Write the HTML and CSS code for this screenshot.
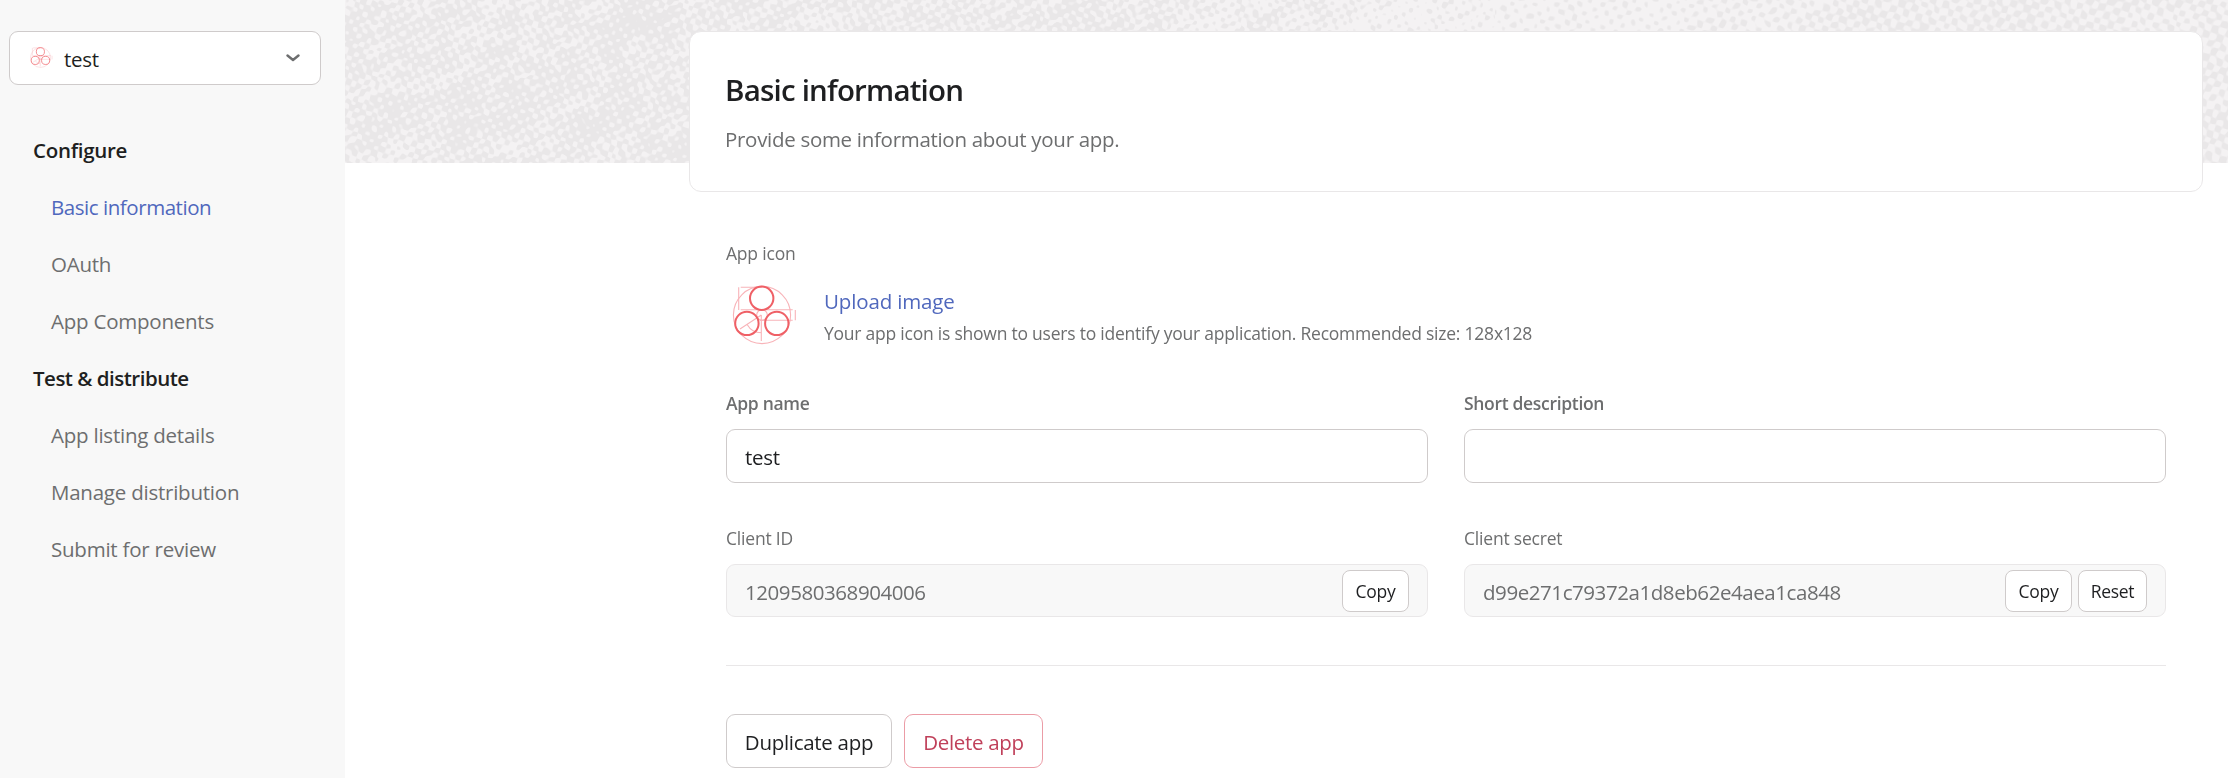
FILE: index.html
```html
<!DOCTYPE html>
<html lang="en">
<head>
<meta charset="utf-8">
<title>Basic information</title>
<link rel="stylesheet" href="styles.css">
</head>
<body>
<svg class="defs" aria-hidden="true">
  <symbol id="app-logo" viewBox="0 0 72 72">
    <g fill="none" stroke="#f8b4b9" stroke-width="1.100">
      <circle cx="36" cy="36" r="28.600"/>
      <circle cx="36" cy="36" r="5.300"/>
      <path d="M14.700 8.300H36M12.700 8.300V31M14.700 30.700H66.700M34 41.300H66.700M69.300 31V41.300M35.300 36V62M14 50L35.300 36M21.300 45.700q4.500 8 14 8"/>
    </g>
    <g fill="none" stroke="#ef6066" stroke-width="2">
      <circle cx="35.700" cy="19.300" r="11.700"/><circle cx="20.900" cy="44.400" r="11.700"/><circle cx="50.800" cy="44.400" r="11.700"/>
    </g>
  </symbol>
</svg>
<div class="page">
  <aside class="sidebar">
    <button class="picker">
      <svg class="picker-logo"><use href="#app-logo"/></svg>
      <span class="picker-name">test</span>
      <svg class="chevron" viewBox="0 0 14 8"><path d="M1.500 1.500L7 6L12.500 1.500"/></svg>
    </button>
    <nav class="nav">
      <h2 class="nav-title">Configure</h2>
      <a class="nav-link active">Basic information</a>
      <a class="nav-link">OAuth</a>
      <a class="nav-link">App Components</a>
      <h2 class="nav-title tight">Test &amp; distribute</h2>
      <a class="nav-link">App listing details</a>
      <a class="nav-link">Manage distribution</a>
      <a class="nav-link">Submit for review</a>
    </nav>
  </aside>
  <main class="main">
    <canvas class="banner" width="1883" height="163"></canvas>
    <div class="content">
      <header class="card">
        <h1 class="title">Basic information</h1>
        <p class="subtitle">Provide some information about your app.</p>
      </header>
      <section class="form">
        <div class="label">App icon</div>
        <div class="icon-row">
          <svg class="app-icon"><use href="#app-logo"/></svg>
          <div class="icon-text">
            <a class="upload">Upload image</a>
            <p class="hint">Your app icon is shown to users to identify your application. Recommended size: 128x128</p>
          </div>
        </div>
        <div class="grid">
          <div class="field">
            <label class="label strong">App name</label>
            <div class="input">test</div>
          </div>
          <div class="field">
            <label class="label strong">Short description</label>
            <div class="input"></div>
          </div>
          <div class="field">
            <label class="label">Client ID</label>
            <div class="input readonly"><span class="value">1209580368904006</span><button class="mini">Copy</button></div>
          </div>
          <div class="field">
            <label class="label">Client secret</label>
            <div class="input readonly"><span class="value">d99e271c79372a1d8eb62e4aea1ca848</span><button class="mini">Copy</button><button class="mini reset">Reset</button></div>
          </div>
        </div>
        <div class="actions">
          <button class="btn">Duplicate app</button>
          <button class="btn danger">Delete app</button>
        </div>
      </section>
    </div>
  </main>
</div>
<script src="banner.js"></script>
</body>
</html>
```
FILE: styles.css
```css
* { box-sizing: border-box; }
body {
  margin: 0;
  background: #fff;
  color: #1e1f21;
  font: 20.5px/28px "Open Sans", "Noto Sans", sans-serif;
  letter-spacing: -.3px;
}
h1, h2, p { margin: 0; }
button { font: inherit; letter-spacing: inherit; color: inherit; background: #fff; cursor: pointer; }
.defs { display: none; }
.page { display: flex; height: 778px; overflow: hidden; }

.sidebar { width: 345px; flex: none; background: #f8f8f8; padding: 31px 24px 0 9px; }
.picker {
  display: flex; align-items: center; width: 312px; height: 54px;
  border: 1px solid #cfcbcb; border-radius: 9px; padding: 0 20px 0 18px; text-align: left;
}
.picker-logo { width: 25px; height: 25px; margin-top: -1px; }
.picker-name { flex: 1; margin-left: 11px; padding-top: 2px; }
.chevron { width: 14px; height: 8px; fill: none; stroke: #6d6e6f; stroke-width: 2.400; stroke-linecap: round; stroke-linejoin: round; }
.nav { padding: 37px 0 0 24px; }
.nav-title { font-size: 20.5px; font-weight: 600; line-height: 57px; letter-spacing: -.3px; }
.nav-title.tight { letter-spacing: -.5px; }
.nav-link { display: block; padding-left: 18px; line-height: 57px; color: #6d6e6f; letter-spacing: -.23px; }
.nav-link.active { color: #5068bd; letter-spacing: -.45px; }

.main { flex: 1; display: grid; grid-template-rows: 163px 1fr; }
.banner { grid-area: 1 / 1; display: block; width: 1883px; height: 163px; }
.content { grid-area: 1 / 1 / 3 / 2; z-index: 1; padding: 31px 25px 0 344px; }
.card { height: 161px; border: 1px solid #e9e7e8; border-radius: 12px; background: #fff; padding: 38px 35px 0; }
.title { font-size: 29.5px; line-height: 40px; font-weight: 600; letter-spacing: -.8px; }
.subtitle { margin-top: 15px; color: #6d6e6f; }

.form { padding: 48px 37px 0; }
.label { display: block; font-size: 17.5px; line-height: 26px; letter-spacing: -.2px; color: #6d6e6f; }
.label.strong { font-weight: 600; letter-spacing: -.32px; }
.icon-row { display: flex; padding-top: 13px; height: 110px; }
.app-icon { width: 72px; height: 72px; }
.icon-text { margin-left: 26px; padding-top: 7px; }
.upload { display: block; line-height: 30px; letter-spacing: -.15px; color: #5068bd; }
.hint { font-size: 17.5px; line-height: 35px; letter-spacing: -.23px; color: #6d6e6f; white-space: nowrap; }
.grid { display: grid; grid-template-columns: 702px 702px; column-gap: 36px; row-gap: 42px; margin-top: 14px; }
.field .label { margin-bottom: 13px; }
.input { display: flex; align-items: center; height: 54px; border: 1px solid #cfcbcb; border-radius: 9px; padding: 2px 18px 0; }
.readonly { height: 53px; background: #f8f8f8; border-color: #e9e7e8; color: #6d6e6f; gap: 6px; padding-top: 0; }
.value { flex: 1; padding-top: 3px; letter-spacing: -.43px; }
.mini { height: 42px; width: 67px; border: 1px solid #cfcbcb; border-radius: 8px; font-size: 17.5px; color: #1e1f21; padding: 0; }
.reset { width: 69px; }
.actions { display: flex; gap: 12px; margin-top: 48px; padding-top: 48px; border-top: 1px solid #e9e7e8; }
.btn { height: 54px; width: 166px; border: 1px solid #cfcbcb; border-radius: 9px; padding: 2px 0 0; }
.danger { width: 139px; color: #c0405a; border-color: #eb9ca6; }
```
FILE: banner.js
```js
// Halftone texture: a rotated dot screen whose dot size follows smooth noise.
const canvas = document.querySelector('.banner');
const ctx = canvas.getContext('2d');
const { width, height } = canvas;
const image = ctx.createImageData(width, height);

function hash(x, y) {
  const s = Math.sin(x * 127.1 + y * 311.7) * 43758.5453;
  return s - Math.floor(s);
}
function noise(x, y) {
  const xi = Math.floor(x), yi = Math.floor(y);
  let u = x - xi, v = y - yi;
  u = u * u * (3 - 2 * u);
  v = v * v * (3 - 2 * v);
  const a = hash(xi, yi) * (1 - u) + hash(xi + 1, yi) * u;
  const b = hash(xi, yi + 1) * (1 - u) + hash(xi + 1, yi + 1) * u;
  return (a * (1 - v) + b * v) * 2 - 1;
}
// Overall density along the strip: dark left, pale centre, medium right.
function density(x) {
  if (x < 750) return 0.35;
  if (x < 1000) return 0.35 - (x - 750) / 250 * 1.5;
  if (x < 1300) return -1.15;
  return Math.min(-0.1, -1.15 + (x - 1300) / 200);
}
const angle = -0.45;
const c = Math.cos(angle), s = Math.sin(angle);
for (let y = 0; y < height; y++) {
  for (let x = 0; x < width; x++) {
    const pitch = x < 1150 ? 8.3 : 10;
    const wx = x + noise(x / 9, y / 9) * 1.8, wy = y + noise(x / 9 + 90, y / 9) * 1.8;
    const u = wx * c + wy * s, v = -wx * s + wy * c;
    const dots = Math.cos(u * 2 * Math.PI / pitch) + Math.cos(v * 2 * Math.PI / pitch);
    const amount = x < 1150 ? 1 : 0.5;
    const streak = noise(u / 50, v / 22) * 0.5 + noise(u / 18 + 50, v / 8) * 0.95;
    const grain = noise(x / 5, y / 5) * 1.1;
    const k = Math.max(0, Math.min(1, (dots + (streak + grain) * amount + density(x)) * 0.9 + 0.5));
    const i = (y * width + x) * 4;
    image.data[i] = 244 - 11 * k;
    image.data[i + 1] = 242 - 11 * k;
    image.data[i + 2] = 243 - 11 * k;
    image.data[i + 3] = 255;
  }
}
ctx.putImageData(image, 0, 0);
```
